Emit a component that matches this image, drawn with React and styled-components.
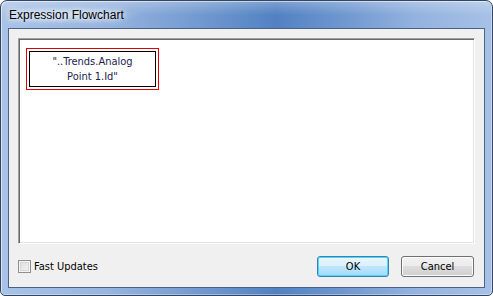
import React, { useState } from 'react';
import styled, { createGlobalStyle } from 'styled-components';

const GlobalStyle = createGlobalStyle`
  html, body {
    margin: 0;
    padding: 0;
    background: #ffffff;
  }
  body {
    font-family: "DejaVu Sans Condensed", "DejaVu Sans", sans-serif;
  }
`;

const Window = styled.div`
  box-sizing: border-box;
  width: 493px;
  height: 296px;
  display: flex;
  flex-direction: column;
  border: 1px solid #34465f;
  border-radius: 7px 7px 5px 5px;
  padding: 0 7px 7px 7px;
  background:
    linear-gradient(to bottom, rgba(255, 255, 255, 0.25) 0px, rgba(255, 255, 255, 0) 14px),
    linear-gradient(
      to right,
      #a9c3e7 0%,
      #96b4df 22%,
      #6f97cf 42%,
      #5281c2 56%,
      #6f98d0 70%,
      #93b2df 84%,
      #a7c1e6 100%
    );
  box-shadow: inset 1px 1px 0 rgba(255, 255, 255, 0.55), inset -1px -1px 0 rgba(255, 255, 255, 0.35);
`;

const TitleBar = styled.div`
  height: 29px;
  display: flex;
  align-items: center;
  padding-left: 1px;
`;

const Title = styled.span`
  font-family: "Liberation Sans", Arial, sans-serif;
  font-size: 12px;
  color: #000000;
  padding: 2px 18px 2px 0;
  margin-top: 1px;
  text-shadow: 0 0 6px rgba(255, 255, 255, 0.95), 0 0 10px rgba(255, 255, 255, 0.8);
  background: radial-gradient(ellipse at 40% 50%, rgba(255, 255, 255, 0.45) 0%, rgba(255, 255, 255, 0) 70%);
`;

const Client = styled.div`
  flex: 1;
  display: flex;
  flex-direction: column;
  background: #f0f0f0;
  border: 1px solid #4c6386;
  padding: 9px 9px 10px 9px;
  box-sizing: border-box;
`;

const Canvas = styled.div`
  position: relative;
  height: 204px;
  background: #ffffff;
  border: 1px solid;
  border-color: #a0a0a0 #ffffff #ffffff #a0a0a0;
  box-shadow: inset 1px 1px 0 #696969, inset -1px -1px 0 #e3e3e3;
`;

const Node = styled.div`
  position: absolute;
  left: ${(p) => p.x}px;
  top: ${(p) => p.y}px;
  width: 133px;
  height: 42px;
  box-sizing: border-box;
  border: 1px solid #e00000;
  padding: 2px;
  display: flex;
`;

const NodeInner = styled.div`
  flex: 1;
  border: 1px solid #000000;
  display: flex;
  flex-direction: column;
  align-items: center;
  justify-content: center;
  font-family: "DejaVu Sans Condensed", "DejaVu Sans", sans-serif;
  font-size: 11px;
  line-height: 15px;
  color: #1c1c4c;
  text-align: center;
  padding-bottom: 1px;
`;

const Footer = styled.div`
  display: flex;
  align-items: center;
  margin-top: 12px;
  padding-right: 1px;
`;

const CheckLabel = styled.label`
  display: flex;
  align-items: center;
  gap: 3px;
  font-family: "DejaVu Sans Condensed", "DejaVu Sans", sans-serif;
  font-size: 11px;
  color: #000000;
  cursor: default;
  margin-top: -1px;
`;

const CheckBox = styled.span`
  width: 13px;
  height: 13px;
  box-sizing: border-box;
  border: 1px solid #8e8f8f;
  background: linear-gradient(135deg, #dcdcdc 0%, #f4f4f4 100%);
  box-shadow: inset 0 0 0 1px #f4f4f4, inset 0 0 0 2px #d8d8d8;
  display: flex;
  align-items: center;
  justify-content: center;
  font-size: 10px;
  line-height: 1;
`;

const Spacer = styled.div`
  flex: 1;
`;

const Button = styled.button`
  width: ${(p) => p.w}px;
  height: 21px;
  margin-left: ${(p) => p.gap || 0}px;
  box-sizing: border-box;
  border-radius: 3px;
  font-family: "DejaVu Sans Condensed", "DejaVu Sans", sans-serif;
  font-size: 11px;
  color: #000000;
  padding: 0;
  border: 1px solid ${(p) => (p.primary ? '#3c7fb1' : '#707070')};
  background: ${(p) =>
    p.primary
      ? 'linear-gradient(to bottom, #eaf6fd 0%, #d9f0fc 50%, #bee6fd 50%, #a7d9f5 100%)'
      : 'linear-gradient(to bottom, #f2f2f2 0%, #ebebeb 50%, #dddddd 50%, #cfcfcf 100%)'};
  box-shadow: inset 0 0 0 1px ${(p) => (p.primary ? '#48d8fb' : '#fcfcfc')};
`;

export default function App() {
  const [fast, setFast] = useState(false);
  return (
    <>
      <GlobalStyle />
      <Window>
        <TitleBar>
          <Title>Expression Flowchart</Title>
        </TitleBar>
        <Client>
          <Canvas>
            <Node x={7} y={9}>
              <NodeInner>
                <span>"..Trends.Analog</span>
                <span>Point 1.Id"</span>
              </NodeInner>
            </Node>
          </Canvas>
          <Footer>
            <CheckLabel onClick={() => setFast(!fast)}>
              <CheckBox>{fast ? '✓' : ''}</CheckBox>
              Fast Updates
            </CheckLabel>
            <Spacer />
            <Button primary w={72}>OK</Button>
            <Button w={73} gap={12}>Cancel</Button>
          </Footer>
        </Client>
      </Window>
    </>
  );
}
